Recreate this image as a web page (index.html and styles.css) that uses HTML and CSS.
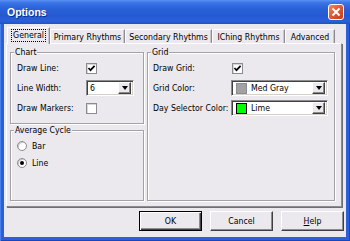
FILE: index.html
```html
<!DOCTYPE html>
<html>
<head>
<meta charset="utf-8">
<link rel="stylesheet" href="styles.css">
</head>
<body>
<div class="window">
  <div class="titlebar">
    <span class="title">Options</span>
    <span class="close"><svg width="10" height="10" viewBox="0 0 10 10"><path d="M1.5 1.5 L8.5 8.5 M8.5 1.5 L1.5 8.5" stroke="#fff" stroke-width="2" fill="none"/></svg></span>
  </div>
  <div class="client">
    <div class="tabs">
      <div class="tab active t-general"><span class="focus">General</span></div>
      <div class="tab t-primary">Primary Rhythms</div>
      <div class="tab t-secondary">Secondary Rhythms</div>
      <div class="tab t-iching">IChing Rhythms</div>
      <div class="tab t-advanced">Advanced</div>
    </div>
    <div class="page">
      <div class="col-left">
        <div class="group chart">
          <span class="legend">Chart</span>
          <div class="rows rows-chart">
            <span class="lbl">Draw Line:</span>
            <span class="check"><svg width="9" height="9" viewBox="0 0 9 9"><path d="M1.5 4 L3.5 6.2 L7.6 1.8" stroke="#000" stroke-width="1.7" fill="none"/></svg></span>
            <span class="lbl">Line Width:</span>
            <span class="combo combo-small"><span class="combo-text">6</span><span class="drop"><span class="arrow"></span></span></span>
            <span class="lbl">Draw Markers:</span>
            <span class="check"></span>
          </div>
        </div>
        <div class="group avg">
          <span class="legend">Average Cycle</span>
          <div class="radio-row"><span class="radio"></span><span class="lbl">Bar</span></div>
          <div class="radio-row"><span class="radio on"></span><span class="lbl">Line</span></div>
        </div>
      </div>
      <div class="group grid">
        <span class="legend">Grid</span>
        <div class="rows rows-grid">
          <span class="lbl">Draw Grid:</span>
          <span class="check check-grid"><svg width="9" height="9" viewBox="0 0 9 9"><path d="M1.5 4 L3.5 6.2 L7.6 1.8" stroke="#000" stroke-width="1.7" fill="none"/></svg></span>
          <span class="lbl">Grid Color:</span>
          <span class="combo combo-wide"><span class="swatch sw-gray"></span><span class="combo-text">Med Gray</span><span class="drop"><span class="arrow"></span></span></span>
          <span class="lbl">Day Selector Color:</span>
          <span class="combo combo-wide"><span class="swatch sw-lime"></span><span class="combo-text">Lime</span><span class="drop"><span class="arrow"></span></span></span>
        </div>
      </div>
    </div>
    <div class="buttons">
      <span class="btn default">OK</span>
      <span class="btn">Cancel</span>
      <span class="btn"><u>H</u>elp</span>
    </div>
  </div>
</div>
</body>
</html>
```
FILE: styles.css
```css
* { box-sizing: border-box; }
html, body { margin: 0; padding: 0; }
body {
  width: 350px; height: 241px; overflow: hidden;
  font-family: "DejaVu Sans Condensed", "DejaVu Sans", sans-serif;
  font-stretch: condensed;
  font-size: 8.7px; color: #000; background: #fff;
}
.window {
  width: 350px; height: 241px;
  display: flex; flex-direction: column;
  background: #2b60d6;
  box-shadow: inset 1px 0 #4a80ea, inset -1px 0 #1a47b8, inset 0 -1px #1a47b8;
}
.titlebar {
  height: 24px; flex: none;
  display: flex; align-items: center; justify-content: space-between;
  padding: 0 6px 0 7px;
  background: linear-gradient(#5a91f2 0%, #3a74e6 12%, #2a62d9 35%, #2559d2 65%, #2a60d8 88%, #1f52c8 100%);
}
.title {
  color: #fff; font-weight: bold; font-size: 10.5px;
  font-family: "Liberation Sans", Arial, sans-serif; font-stretch: normal;
  text-shadow: 1px 1px #0b2f8f;
}
.close {
  width: 16px; height: 16px;
  display: flex; align-items: center; justify-content: center;
  border: 1px solid #fff; border-radius: 3px;
  background: linear-gradient(135deg, #f08a68 0%, #e05a34 45%, #c43e18 100%);
}
.client {
  flex: 1; margin: 0 4px 4px;
  background: #ebe9ed;
  display: flex; flex-direction: column;
}
.tabs {
  display: flex; align-items: flex-end;
  height: 16px; margin: 3px 0 0 3px;
}
.tab {
  height: 14px;
  display: flex; align-items: center; justify-content: center;
  border-top: 1px solid #fff; border-left: 1px solid #fff;
  border-right: 1px solid #8c8b8f;
  box-shadow: inset -1px 0 #c8c7cb;
  white-space: nowrap;
  padding-top: 1px;
}
.tab.active {
  height: 17px; margin-bottom: -1px;
  background: #ebe9ed;
  position: relative; z-index: 2;
  padding-top: 0; padding-bottom: 1px;
}
.focus { outline: 1px dotted #000; outline-offset: 0; padding: 0 1px; line-height: 11px; }
.t-general { width: 43px; }
.t-primary { width: 75px; }
.t-secondary { width: 87px; }
.t-iching { width: 73px; }
.t-advanced { width: 50px; }
.page {
  height: 164px; margin: 0 4px 0 2px;
  border-top: 1px solid #fff; border-left: 1px solid #fff;
  border-right: 1px solid #8c8b8f; border-bottom: 1px solid #8c8b8f;
  box-shadow: 1px 1px #6f6e72;
  display: flex; gap: 3px;
  padding: 8px 6px 5px 3px;
}
.col-left { width: 134px; display: flex; flex-direction: column; gap: 6px; }
.group {
  position: relative;
  border: 1px solid #a3a2a6;
  box-shadow: inset 1px 1px #fff, 1px 1px #fff;
}
.legend {
  position: absolute; top: -6px; left: 3px;
  padding: 0 1px; line-height: 11px;
  background: #ebe9ed;
}
.chart { height: 72px; padding: 5px 0 0 6px; }
.avg { height: 71px; padding: 6px 0 0 6px; }
.grid { flex: 1; padding: 5px 0 0 5px; }
.rows { display: grid; grid-auto-rows: 20px; align-items: center; }
.rows-chart { grid-template-columns: 69px auto; justify-items: start; }
.rows-grid { grid-template-columns: 78px auto; justify-items: start; }
.lbl { white-space: nowrap; }
.check {
  width: 11px; height: 11px;
  background: #fff;
  border: 1px solid #8c8b8f;
  box-shadow: inset 1px 1px #d8d7db;
  display: flex; align-items: center; justify-content: center;
}
.check-grid { margin-left: 1px; }
.combo {
  height: 16px;
  display: flex; align-items: center;
  background: #fff;
  border: 1px solid; border-color: #8c8b8f #fff #fff #8c8b8f;
  box-shadow: inset 1px 1px #404040, inset -1px -1px #d4d0c8;
  padding: 2px 2px 2px 3px;
}
.combo-small { width: 48px; }
.combo-wide { width: 97px; }
.combo-text { flex: 1; white-space: nowrap; }
.drop {
  width: 13px; height: 12px; flex: none;
  background: #ebe9ed;
  border: 1px solid; border-color: #fff #404040 #404040 #fff;
  box-shadow: inset -1px -1px #8c8b8f;
  display: flex; align-items: center; justify-content: center;
}
.arrow {
  width: 0; height: 0;
  border-left: 3.5px solid transparent; border-right: 3.5px solid transparent;
  border-top: 4px solid #000;
}
.swatch { width: 11px; height: 11px; flex: none; margin: 0 4px 0 1px; }
.sw-gray { background: #a2a1a5; border: 1px solid #8c8b8f; }
.sw-lime { background: #00ff00; border: 1px solid #000; }
.radio-row { height: 17px; display: flex; align-items: center; gap: 5px; }
.radio {
  width: 10px; height: 10px; border-radius: 50%;
  background: #fff; border: 1px solid #8c8b8f;
  box-shadow: inset 1px 1px #c8c7cb;
  display: flex; align-items: center; justify-content: center;
}
.radio.on::after {
  content: ""; width: 4px; height: 4px; border-radius: 50%; background: #000;
}
.buttons {
  display: flex; justify-content: flex-end; gap: 8px;
  margin-top: 4px; padding-right: 2px;
}
.btn {
  width: 63px; height: 20px;
  display: flex; align-items: center; justify-content: center;
  border: 1px solid; border-color: #fff #404040 #404040 #fff;
  box-shadow: inset -1px -1px #8c8b8f;
}
.btn.default {
  border: 1px solid #000;
  box-shadow: inset 1px 1px #fff, inset -1px -1px #404040, inset -2px -2px #8c8b8f;
}
```
